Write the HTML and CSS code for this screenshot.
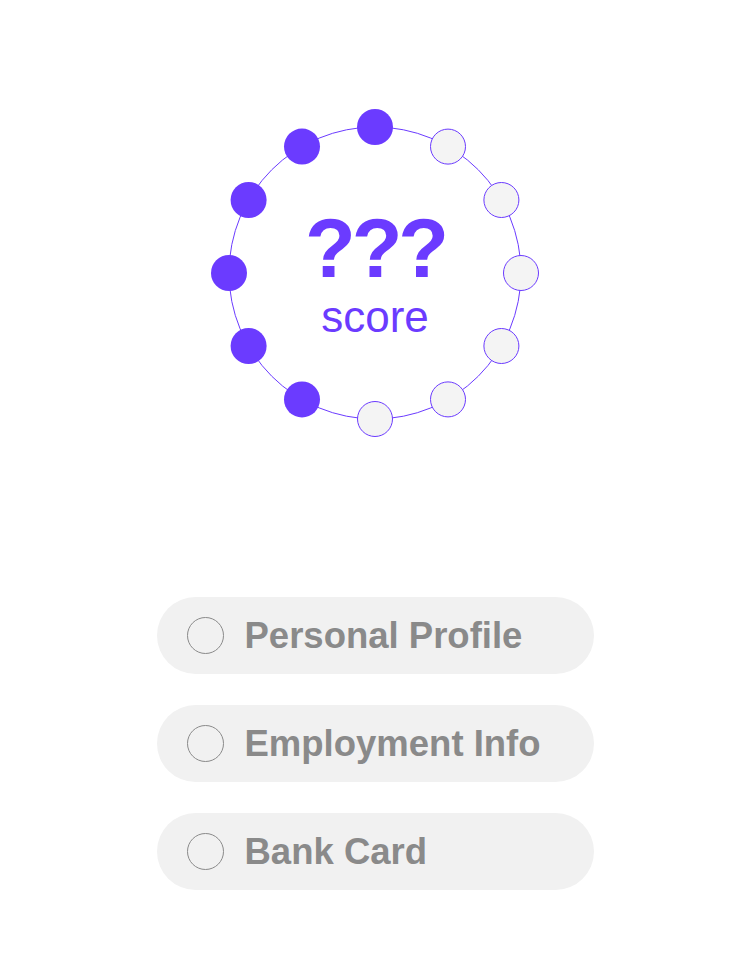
FILE: index.html
```html
<!DOCTYPE html>
<html>
<head>
<meta charset="utf-8">
<link rel="stylesheet" href="styles.css">
</head>
<body>
<div class="page">
  <div class="ring">
    <svg class="ring-svg" width="330" height="330" viewBox="0 0 330 330">
      <circle cx="165" cy="165" r="146" fill="none" stroke="#6b3bff" stroke-width="1"/>
      <g class="dot-on">
        <circle cx="165" cy="19" r="18"/>
        <circle cx="92" cy="38.6" r="18"/>
        <circle cx="38.6" cy="92" r="18"/>
        <circle cx="19" cy="165" r="18"/>
        <circle cx="38.6" cy="238" r="18"/>
        <circle cx="92" cy="291.4" r="18"/>
      </g>
      <g class="dot-off">
        <circle cx="238" cy="38.6" r="17.5"/>
        <circle cx="291.4" cy="92" r="17.5"/>
        <circle cx="311" cy="165" r="17.5"/>
        <circle cx="291.4" cy="238" r="17.5"/>
        <circle cx="238" cy="291.4" r="17.5"/>
        <circle cx="165" cy="311" r="17.5"/>
      </g>
    </svg>
    <div class="score">
      <div class="score-value">???</div>
      <div class="score-label">score</div>
    </div>
  </div>

  <div class="steps">
    <div class="step"><span class="radio"></span><span class="step-text">Personal Profile</span></div>
    <div class="step"><span class="radio"></span><span class="step-text">Employment Info</span></div>
    <div class="step"><span class="radio"></span><span class="step-text">Bank Card</span></div>
  </div>
</div>
</body>
</html>
```
FILE: styles.css
```css
html, body {
  margin: 0;
  padding: 0;
  background: #ffffff;
}
body {
  font-family: "Liberation Sans", Arial, sans-serif;
}
.page {
  width: 750px;
  height: 973px;
  display: flex;
  flex-direction: column;
  align-items: center;
  padding-top: 108px;
  box-sizing: border-box;
}
.ring {
  position: relative;
  width: 330px;
  height: 330px;
}
.ring-svg {
  display: block;
}
.dot-on circle {
  fill: #6b3bff;
}
.dot-off circle {
  fill: #f4f4f4;
  stroke: #6b3bff;
  stroke-width: 1;
}
.score {
  position: absolute;
  inset: 0;
  display: flex;
  flex-direction: column;
  align-items: center;
  justify-content: center;
  color: #6b3bff;
}
.score-value {
  font-weight: bold;
  font-size: 83px;
  line-height: 84px;
  letter-spacing: -4px;
  margin-top: 0;
}
.score-label {
  font-size: 44px;
  line-height: 44px;
  margin-top: 4px;
}
.steps {
  margin-top: 159px;
  display: flex;
  flex-direction: column;
  gap: 31px;
}
.step {
  width: 437px;
  height: 77px;
  border-radius: 39px;
  background: #f1f1f1;
  display: flex;
  align-items: center;
  padding-left: 30px;
  box-sizing: border-box;
}
.radio {
  width: 37px;
  height: 37px;
  border-radius: 50%;
  border: 1.5px solid #8a8a8a;
  box-sizing: border-box;
  flex: none;
}
.step-text {
  margin-left: 21px;
  font-size: 36.5px;
  font-weight: bold;
  color: #8a8a8a;
}
```
